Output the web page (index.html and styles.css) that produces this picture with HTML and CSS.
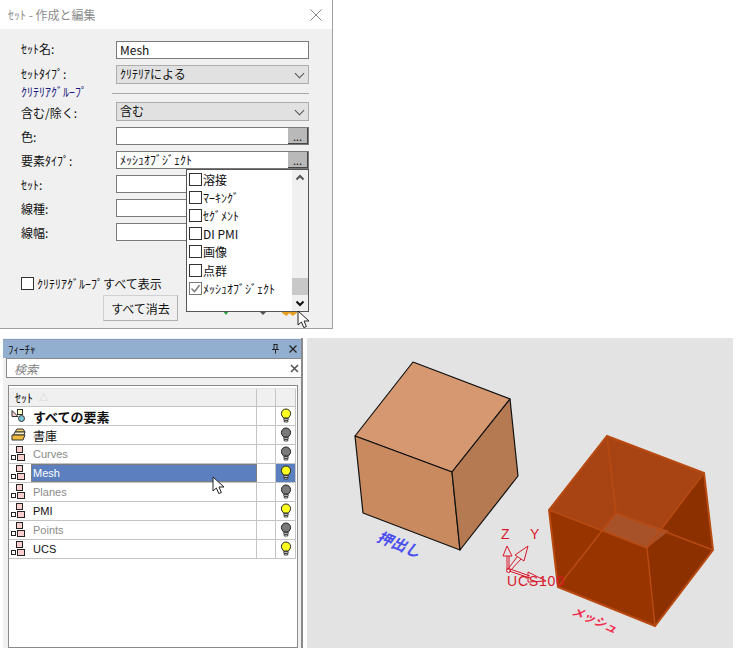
FILE: index.html
```html
<!DOCTYPE html>
<html lang="ja">
<head>
  <meta charset="UTF-8">
  <title>ｾｯﾄ - 作成と編集</title>
  <link rel="stylesheet" href="styles.css">
</head>
<body>
  <svg class="defs" width="0" height="0">
    <symbol id="setIcon" viewBox="0 0 16 16">
      <rect x="5.5" y="0.5" width="6" height="6" fill="#f9cfcf" stroke="#222"/>
      <rect x="0.5" y="9.5" width="4" height="4" fill="#fff" stroke="#222"/>
      <rect x="6.5" y="8.5" width="7" height="6" fill="#f9cfcf" stroke="#222"/>
    </symbol>
    <symbol id="bulb" viewBox="0 0 12 16">
      <path d="M6 1a4.6 4.6 0 0 0-4.6 4.6c0 2 1.4 3 2.2 4.4h4.8c.8-1.400 2.200-2.400 2.200-4.400A4.600 4.600 0 0 0 6 1z" fill="currentColor" stroke="#222"/>
      <path d="M3.800 10.500h4.400v1.600H3.800zM4.200 12.600h3.600v1.400H4.200z" fill="#fff" stroke="#222" stroke-width=".8"/>
    </symbol>
    <symbol id="cursor" viewBox="0 0 14 20">
      <path d="M1 1v14l3.400-3 2.400 5.600 2.600-1.100L7 11h5z" fill="#fff" stroke="#222"/>
    </symbol>
  </svg>

  <!-- Dialog -->
  <div class="dialog">
    <div class="titlebar">
      <span>ｾｯﾄ - 作成と編集</span>
      <svg class="close" width="12" height="12" viewBox="0 0 12 12"><path d="M.5.5l11 11M11.5.5l-11 11" stroke="#8a8a8a" fill="none"/></svg>
    </div>
    <div class="form">
      <div class="row high"><label>ｾｯﾄ名:</label><div class="field">Mesh</div></div>
      <div class="row high tall tight"><label>ｾｯﾄﾀｲﾌﾟ:</label><div class="combo">ｸﾘﾃﾘｱによる<span class="chev"></span></div></div>
      <div class="group"><span>ｸﾘﾃﾘｱｸﾞﾙｰﾌﾟ</span><i></i></div>
      <div class="row tall"><label>含む/除く:</label><div class="combo">含む<span class="chev"></span></div></div>
      <div class="row"><label>色:</label><div class="field"><span class="dots">...</span></div></div>
      <div class="row"><label>要素ﾀｲﾌﾟ:</label><div class="field">ﾒｯｼｭｵﾌﾞｼﾞｪｸﾄ<span class="dots">...</span></div></div>
      <div class="row"><label>ｾｯﾄ:</label><div class="field"></div></div>
      <div class="row"><label>線種:</label><div class="field"></div></div>
      <div class="row"><label>線幅:</label><div class="field"></div></div>
      <div class="showAll"><span class="check"></span>ｸﾘﾃﾘｱｸﾞﾙｰﾌﾟすべて表示</div>
      <div class="actions">
        <button class="clear">すべて消去</button>
        <span class="tool green"></span>
        <span class="tool gray"></span>
        <span class="tool orange"></span>
      </div>
    </div>

    <!-- Open element type list -->
    <div class="dropdown">
      <ul class="items">
        <li><span class="check"></span>溶接</li>
        <li><span class="check"></span>ﾏｰｷﾝｸﾞ</li>
        <li><span class="check"></span>ｾｸﾞﾒﾝﾄ</li>
        <li><span class="check"></span>DI PMI</li>
        <li><span class="check"></span>画像</li>
        <li><span class="check"></span>点群</li>
        <li><span class="check on"><svg width="13" height="13" viewBox="0 0 13 13"><path d="M2.500 6.500l3 3.200 5-6.500" fill="none" stroke="#777" stroke-width="1.500"/></svg></span>ﾒｯｼｭｵﾌﾞｼﾞｪｸﾄ</li>
      </ul>
      <div class="scrollbar">
        <svg width="16" height="16" viewBox="0 0 16 16"><path d="M4.500 9.500l3.500-3.500 3.500 3.500" fill="none" stroke="#555" stroke-width="2"/></svg>
        <div class="thumb"></div>
        <svg width="16" height="16" viewBox="0 0 16 16"><path d="M4.500 6.500l3.500 3.500 3.500-3.500" fill="none" stroke="#111" stroke-width="2"/></svg>
      </div>
    </div>
    <svg class="cursor dialogCursor" width="14" height="20"><use href="#cursor"/></svg>
  </div>

  <div class="bottom">
    <!-- Feature panel -->
    <div class="panel">
      <div class="panelHead">
        <span>ﾌｨｰﾁｬ</span>
        <span class="panelBtns">
          <svg width="9" height="10" viewBox="0 0 9 10"><path d="M2.500.5h4M3 .5v5M6 .5v5M1 5.500h7M4.500 5.500v4" stroke="#222" fill="none"/></svg>
          <svg width="8" height="8" viewBox="0 0 8 8"><path d="M.5.5l7 7M7.500.5l-7 7" stroke="#222" stroke-width="1.200" fill="none"/></svg>
        </span>
      </div>
      <div class="search">
        <span>検索</span>
        <svg width="9" height="9" viewBox="0 0 9 9"><path d="M1 1l7 7M8 1l-7 7" stroke="#555" stroke-width="1.600" fill="none"/></svg>
      </div>
      <div class="listBox">
        <div class="tableRow head">
          <div class="name">ｾｯﾄ<span class="sort">△</span></div><div class="col"></div><div class="col"></div>
        </div>
        <div class="tableRow">
          <div class="rowIcon">
            <svg width="16" height="16" viewBox="0 0 16 16"><path d="M1 2.500v6h6z" fill="#f9cfcf" stroke="#333"/><rect x="6.500" y="1.500" width="5" height="5" fill="#ffffc8" stroke="#333"/><circle cx="10.500" cy="10.500" r="3" fill="#7cc8d8" stroke="#333"/></svg>
          </div>
          <div class="name strong">すべての要素</div><div class="col"></div>
          <div class="col"><svg class="bulb on" width="12" height="16"><use href="#bulb"/></svg></div>
        </div>
        <div class="tableRow">
          <div class="rowIcon">
            <svg width="16" height="16" viewBox="0 0 16 16"><path d="M4 5l2-3h6l2 3z" fill="#f5d36a" stroke="#333"/><path d="M2.500 8l1.500-3h10l-1 3z" fill="#fff2c0" stroke="#333"/><path d="M1 8h13l-2 5H1z" fill="#eeb93c" stroke="#333"/></svg>
          </div>
          <div class="name cjk">書庫</div><div class="col"></div>
          <div class="col"><svg class="bulb" width="12" height="16"><use href="#bulb"/></svg></div>
        </div>
        <div class="tableRow">
          <div class="rowIcon"><svg width="16" height="16"><use href="#setIcon"/></svg></div>
          <div class="name off">Curves</div><div class="col"></div>
          <div class="col"><svg class="bulb" width="12" height="16"><use href="#bulb"/></svg></div>
        </div>
        <div class="tableRow selected">
          <div class="rowIcon"><svg width="16" height="16"><use href="#setIcon"/></svg></div>
          <div class="name">Mesh</div><div class="col"></div>
          <div class="col"><svg class="bulb on" width="12" height="16"><use href="#bulb"/></svg></div>
        </div>
        <div class="tableRow">
          <div class="rowIcon"><svg width="16" height="16"><use href="#setIcon"/></svg></div>
          <div class="name off">Planes</div><div class="col"></div>
          <div class="col"><svg class="bulb" width="12" height="16"><use href="#bulb"/></svg></div>
        </div>
        <div class="tableRow">
          <div class="rowIcon"><svg width="16" height="16"><use href="#setIcon"/></svg></div>
          <div class="name">PMI</div><div class="col"></div>
          <div class="col"><svg class="bulb on" width="12" height="16"><use href="#bulb"/></svg></div>
        </div>
        <div class="tableRow">
          <div class="rowIcon"><svg width="16" height="16"><use href="#setIcon"/></svg></div>
          <div class="name off">Points</div><div class="col"></div>
          <div class="col"><svg class="bulb" width="12" height="16"><use href="#bulb"/></svg></div>
        </div>
        <div class="tableRow">
          <div class="rowIcon"><svg width="16" height="16"><use href="#setIcon"/></svg></div>
          <div class="name">UCS</div><div class="col"></div>
          <div class="col"><svg class="bulb on" width="12" height="16"><use href="#bulb"/></svg></div>
        </div>
      </div>
      <svg class="cursor listCursor" width="14" height="20"><use href="#cursor"/></svg>
    </div>

    <!-- 3D view, svg origin is at page (307,338) -->
    <svg class="viewport" width="426" height="310" viewBox="307 338 426 310">
      <g stroke="#111" stroke-width="1.200" stroke-linejoin="round">
        <path d="M413 362L510 399L452 472L355 436z" fill="#d69870"/>
        <path d="M355 436L452 472L460 550L363 513z" fill="#c98a5f"/>
        <path d="M452 472L510 399L518 476L460 550z" fill="#b57a52"/>
      </g>
      <text class="label blue" transform="translate(376 541) rotate(22)">押出し</text>

      <path d="M607 436L704 473L713 550L655 626L558 587L549 510z" fill="#983400"/>
      <path d="M607 436L704 473L647 548L549 510z" fill="#a84414"/>
      <path d="M704 473L713 550L655 626L647 548z" fill="#8c3000"/>
      <path d="M616 513L669 531L647 548L602 531z" fill="#a8522a"/>
      <g fill="none" stroke="#b84a12" stroke-width="1.500">
        <path d="M607 436L616 513L713 550M616 513L558 587"/>
        <path d="M549 510L647 548L704 473M647 548L655 626"/>
      </g>
      <path d="M607 436L704 473L713 550L655 626L558 587L549 510z" fill="none" stroke="#b84a12" stroke-width="2"/>

      <g fill="none" stroke="#d8182a" stroke-width="1">
        <path d="M507 570V556M509 570V556M503 556L507 546L512 556z"/>
        <path d="M508 569L517 557M510 571L521 559M515 555L528 546L524 561z"/>
        <path d="M509 571L530 578M510 569L530 576M528 572L546 581L528 582z"/>
        <circle cx="508.500" cy="570.500" r="2"/>
      </g>
      <text class="axis" x="501" y="539">Z</text>
      <text class="axis" x="530" y="539">Y</text>
      <text class="axis ucs" x="507" y="586">UCS100</text>
      <text class="label red" transform="translate(571 614) rotate(24)">メッシュ</text>
    </svg>
  </div>
</body>
</html>
```

FILE: styles.css
```css
/* Basic styling */
body {
  margin: 0;
  background: #fff;
  font-family: "Noto Sans CJK JP", "Liberation Sans", sans-serif;
  font-size: 12px;
  color: #111;
}
.defs {
  position: absolute;
}
.cursor {
  position: absolute;
}

/* Dialog */
.dialog {
  position: relative;
  width: 332px;
  height: 328px;
  background: #f0f0f0;
  border-right: 1px solid #a0a0a0;
  border-bottom: 1px solid #a0a0a0;
}
.titlebar {
  height: 29px;
  padding: 0 10px 0 8px;
  background: #fff;
  display: flex;
  align-items: center;
  justify-content: space-between;
  color: #8c8c8c;
  font-size: 12px;
}
.form {
  padding: 12px 23px 0 21px;
}
.row {
  display: flex;
  height: 18px;
  margin-bottom: 6px;
  align-items: center;
}
.row.tall {
  height: 19px;
}
.row.tight {
  margin-bottom: 0;
}
.row label {
  width: 95px;
  flex: none;
  padding-top: 1px;
}
.row.high label {
  padding: 0 0 3px;
}
.field, .combo {
  flex: 1;
  height: 100%;
  box-sizing: border-box;
  border: 1px solid #7a7a7a;
  display: flex;
  align-items: center;
  padding: 0 0 2px 3px;
  position: relative;
}
.field {
  background: #fff;
}
.combo {
  background: #e1e1e1;
  border-color: #adadad;
}
.chev {
  position: absolute;
  right: 5px;
  top: 4px;
  width: 6px;
  height: 6px;
  border-right: 1px solid #555;
  border-bottom: 1px solid #555;
  transform: rotate(45deg);
}
.dots {
  position: absolute;
  right: 0;
  top: 0;
  bottom: 0;
  width: 20px;
  background: #b9b9b9;
  border-right: 1px solid #444;
  border-bottom: 1px solid #444;
  box-sizing: border-box;
  font-size: 11px;
  line-height: 16px;
  text-align: center;
  color: #111;
}
.group {
  height: 18px;
  display: flex;
  align-items: center;
  color: #1a1a80;
  padding-bottom: 3px;
  box-sizing: border-box;
}
.group span {
  width: 91px;
  flex: none;
}
.group i {
  flex: 1;
  height: 1px;
  background: #a8a8a8;
  margin-top: 3px;
}
.check {
  width: 11px;
  height: 11px;
  border: 1px solid #333;
  background: #fff;
  flex: none;
  display: inline-block;
}
.check.on {
  border-color: #777;
}
.check svg {
  display: block;
  margin: -1px 0 0 -1px;
}
.showAll {
  margin-top: 35px;
  height: 14px;
  display: flex;
  align-items: center;
  gap: 3px;
}
.actions {
  margin: 5px 0 0 82px;
  height: 26px;
  display: flex;
  align-items: flex-end;
}
.clear {
  flex: none;
  width: 75px;
  height: 26px;
  padding: 0;
  background: #f0f0f0;
  border: 1px solid #d0d0d0;
  border-bottom-color: #b0b0b0;
  border-right-color: #b0b0b0;
  font: inherit;
  color: #111;
  margin-right: 45px;
}
.tool {
  flex: none;
  width: 0;
  height: 0;
  border-left: 4px solid transparent;
  border-right: 4px solid transparent;
  border-top: 4px solid #555;
  margin: 0 15px 6px 0;
}
.tool.green {
  border-top-color: #27a040;
  border-left-width: 3px;
  border-right-width: 3px;
  margin-right: 30px;
}
.tool.orange {
  width: 15px;
  height: 5px;
  border: 0;
  background: #e8a020;
  clip-path: polygon(0 0, 100% 0, 100% 40%, 70% 100%, 50% 40%, 30% 100%, 0 40%);
  margin: 0 0 5px;
}

/* Open list over the form */
.dropdown {
  position: absolute;
  left: 186px;
  top: 169px;
  width: 123px;
  height: 143px;
  box-sizing: border-box;
  border: 1px solid #555;
  background: #fff;
  display: flex;
}
.items {
  list-style: none;
  margin: 0;
  padding: 0 0 0 2px;
  flex: 1;
}
.items li {
  height: 18.200px;
  display: flex;
  align-items: center;
  gap: 1px;
  white-space: nowrap;
}
.scrollbar {
  width: 16px;
  background: #f0f0f0;
  display: flex;
  flex-direction: column;
  justify-content: space-between;
  position: relative;
}
.thumb {
  height: 18px;
  background: #c8c8c8;
  margin-top: 92px;
}
.scrollbar svg {
  flex: none;
}
.dialogCursor {
  left: 297px;
  top: 310px;
}

/* Lower area */
.bottom {
  display: flex;
  margin-top: 9px;
  padding-left: 3px;
  height: 310px;
}
.panel {
  position: relative;
  width: 298px;
  margin-right: 4px;
  background: #f0f0f0;
  border-right: 2px solid #8a8a8a;
  display: flex;
  flex-direction: column;
}
.panelHead {
  height: 19px;
  margin-top: 1px;
  background: #93afd0;
  border-top: 1px solid #8aa0b8;
  box-sizing: border-box;
  display: flex;
  align-items: center;
  justify-content: space-between;
  padding: 0 4px 0 5px;
  font-size: 11px;
}
.panelBtns {
  display: flex;
  align-items: center;
  gap: 9px;
}
.panelBtns svg {
  display: block;
}
.search {
  height: 20px;
  margin-left: 3px;
  box-sizing: border-box;
  background: #fff;
  border: 1px solid #8a8a8a;
  border-right: 0;
  display: flex;
  align-items: center;
  justify-content: space-between;
  padding: 0 2px 0 7px;
  color: #808080;
  font-style: italic;
}
.listBox {
  margin: 7px 3px 0 5px;
  flex: 1;
  min-height: 0;
  background: #fff;
  border: 1px solid #8a8a8a;
  padding-top: 2px;
}
.tableRow {
  display: flex;
  height: 19px;
  box-sizing: border-box;
  border-bottom: 1px solid #c4c4c4;
  font-family: "Liberation Sans", "Noto Sans CJK JP", sans-serif;
  font-size: 11px;
  width: 287px;
}
.tableRow.head {
  background: #f0f0f0;
  border-top: 1px solid #e4e4e4;
  font-family: "Noto Sans CJK JP", sans-serif;
  font-size: 12px;
}
.sort {
  color: #c8c8c8;
  font-size: 9px;
  margin-left: 6px;
}
.rowIcon {
  width: 22px;
  flex: none;
  display: flex;
  align-items: center;
  padding-left: 2px;
  box-sizing: border-box;
}
.name {
  flex: 1;
  min-width: 0;
  display: flex;
  align-items: center;
  padding-left: 2px;
  border-right: 1px solid #c4c4c4;
}
.head .name {
  padding-left: 6px;
}
.name.strong {
  font-family: "Noto Sans CJK JP", sans-serif;
  font-weight: 700;
  font-size: 13px;
}
.name.cjk {
  font-family: "Noto Sans CJK JP", sans-serif;
  font-size: 12px;
}
.name.off {
  color: #8a8a8a;
}
.col {
  width: 18px;
  flex: none;
  border-right: 1px solid #c4c4c4;
  display: flex;
  align-items: center;
  justify-content: center;
}
.col:last-child {
  width: 19px;
}
.selected .name {
  background: #5c7fbf;
  color: #fff;
  outline: 1px solid #7d7d7d;
  outline-offset: -1px;
}
.selected .col:last-child {
  background: #5c7fbf;
}
.bulb {
  color: #7a7a7a;
}
.bulb.on {
  color: #ffff20;
}
.listCursor {
  left: 209px;
  top: 138px;
}

/* 3D view */
.viewport {
  display: block;
  background: #e3e3e3;
}
.label {
  font-style: italic;
  font-weight: 700;
}
.label.blue {
  fill: #4a50f0;
  font-size: 15px;
}
.label.red {
  fill: #f03050;
  font-size: 12px;
}
.axis {
  font-family: "Liberation Sans", sans-serif;
  font-size: 14px;
  fill: #d8182a;
}
.axis.ucs {
  letter-spacing: .8px;
}
```
